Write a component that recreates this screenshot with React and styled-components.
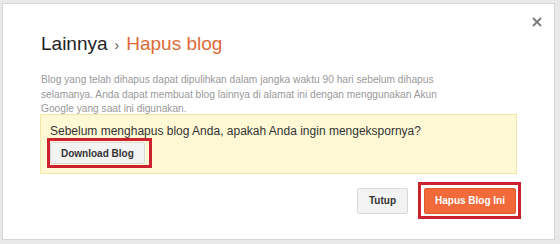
import React from 'react'
import styled, { createGlobalStyle } from 'styled-components'

const GlobalStyle = createGlobalStyle`
  html, body { margin: 0; padding: 0; background: #e9e9e9; }
  body { font-family: Arial, "Liberation Sans", sans-serif; }
`

const Page = styled.div`
  width: 560px;
  height: 244px;
  box-sizing: border-box;
  padding: 3px 5px 4px 2px;
  background: #e9e9e9;
`

const Dialog = styled.div`
  position: relative;
  box-sizing: border-box;
  height: 100%;
  background: #fff;
  border: 1px solid #d6d6d6;
  padding: 28px 36px 0 37px;
  display: flex;
  flex-direction: column;
`

const Close = styled.svg`
  position: absolute;
  top: 13px;
  right: 12px;
  width: 10px;
  height: 10px;
  cursor: pointer;
`

const Title = styled.h1`
  margin: 0 0 0 1px;
  font-size: 19px;
  font-weight: normal;
  line-height: 24px;
  color: #222;
  display: flex;
  align-items: baseline;
  gap: 7px;
`

const Sep = styled.span`
  font-size: 14px;
  color: #555;
`

const Current = styled.span`
  color: #dd6a36;
`

const Text = styled.p`
  margin: 16px 0 -2.5px 1px;
  max-width: 412px;
  font-size: 10.2px;
  line-height: 14.5px;
  color: #999;
`

const Notice = styled.div`
  padding: 9px 9px 5px;
  background: #fff8d5;
  border: 1px solid #f4e6a8;
  font-size: 12px;
  line-height: 14px;
  color: #333;
  width: 477px;
  box-sizing: border-box;
`

const Highlight = styled.span`
  display: inline-flex;
  padding: ${p => p.$pad};
  margin-left: ${p => p.$shift || 0};
  border: 3px solid #cc2230;
`

const Button = styled.button`
  font-family: Arial, "Liberation Sans", sans-serif;
  font-size: 10px;
  font-weight: bold;
  height: ${p => p.$h || '26px'};
  padding: 0 ${p => p.$px || '10px'};
  border-radius: 2px;
  cursor: pointer;
  color: ${p => (p.$danger ? '#fff' : '#333')};
  background: ${p => (p.$danger ? '#f2693a' : '#f3f3f3')};
  border: 1px solid ${p => (p.$danger ? '#e0592b' : '#d9d9d9')};
`

const NoticeText = styled.div`
  margin-bottom: 0;
`

const Footer = styled.div`
  display: flex;
  justify-content: flex-end;
  align-items: center;
  gap: 10px;
  margin-top: 8px;
  width: 481px;
`

export default function App() {
  return (
    <>
      <GlobalStyle />
      <Page>
        <Dialog>
          <Close viewBox="0 0 10 10">
            <path d="M1 1L9 9M9 1L1 9" stroke="#7a7a7a" strokeWidth="1.8" />
          </Close>
          <Title>
            Lainnya <Sep>›</Sep> <Current>Hapus blog</Current>
          </Title>
          <Text>
            Blog yang telah dihapus dapat dipulihkan dalam jangka waktu 90 hari sebelum dihapus
            selamanya. Anda dapat membuat blog lainnya di alamat ini dengan menggunakan Akun
            Google yang saat ini digunakan.
          </Text>
          <Notice>
            <NoticeText>Sebelum menghapus blog Anda, apakah Anda ingin mengekspornya?</NoticeText>
            <Highlight $pad="1px 4px 1px 0" $shift="-3px">
              <Button $h="22px">Download Blog</Button>
            </Highlight>
          </Notice>
          <Footer>
            <Button $px="11px">Tutup</Button>
            <Highlight $pad="2.5px 2px 2.5px 3px">
              <Button $danger>Hapus Blog Ini</Button>
            </Highlight>
          </Footer>
        </Dialog>
      </Page>
    </>
  )
}
